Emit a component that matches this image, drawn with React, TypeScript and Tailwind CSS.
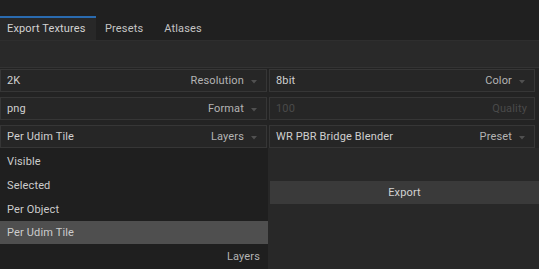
import React from "react";

const Caret = ({ dim }: { dim?: boolean }) => (
  <svg width="6" height="4" viewBox="0 0 6 4" className="ml-[7px]">
    <path d="M0 0 L6 0 L3 3.5 Z" fill={dim ? "#3a3a3a" : "#505050"} />
  </svg>
);

const Field = ({ value, label, disabled }: { value: string; label: string; disabled?: boolean }) => (
  <div className="flex h-[23px] items-center border border-[#363636] bg-[#262626] pl-[6px] pr-[9px] pt-[2px]">
    <span className={disabled ? "text-[#4a4a4a]" : "text-[#d0d0d0]"}>{value}</span>
    <span className={"ml-auto " + (disabled ? "text-[#4a4a4a] -mr-[2px]" : "text-[#b4b4b4]")}>{label}</span>
    {!disabled && <Caret />}
  </div>
);

export default function App() {
  return (
    <div
      className="relative h-[269px] w-[539px] overflow-hidden bg-[#202020] text-[11px] tracking-[0.15px]"
      style={{ fontFamily: "Roboto, 'Noto Sans', sans-serif" }}
    >
      <div className="h-[16px]" />
      <div className="flex h-[25px] items-stretch border-b border-[#2e2e2e]">
        <div className="flex w-[96px] items-center border-t-2 border-[#2a6bb0] bg-[#282828] pl-[7px] pt-[1px] text-[#d2d2d2]">
          Export Textures
        </div>
        <div className="flex items-center pl-[9px] pt-[3px] text-[#c4c4c4]">Presets</div>
        <div className="flex items-center pl-[21px] pt-[3px] text-[#c4c4c4]">Atlases</div>
      </div>
      <div className="h-[27px] border-b border-[#333333] bg-[#292929]" />
      <div className="bg-[#232323] pt-[1px]">
        <div className="grid grid-cols-[267px_266px] gap-x-[2px] gap-y-[5px] pr-[4px]">
          <Field value="2K" label="Resolution" />
          <Field value="8bit" label="Color" />
          <Field value="png" label="Format" />
          <Field value="100" label="Quality" disabled />
          <Field value="Per Udim Tile" label="Layers" />
          <Field value="WR PBR Bridge Blender" label="Preset" />
        </div>
      </div>
      <div className="flex h-[121px]">
        <div className="flex w-[268px] flex-col bg-[#1f1f1f] text-[#cccccc]">
          <div className="flex h-[25px] items-center pl-[7px] pt-[3px]">Visible</div>
          <div className="flex h-[24px] items-center pl-[7px] pt-[2px]">Selected</div>
          <div className="flex h-[24px] items-center pl-[7px] pt-[2px]">Per Object</div>
          <div className="flex h-[23px] items-center bg-[#4f4f4f] pl-[7px] pt-[2px]">Per Udim Tile</div>
          <div className="flex h-[25px] items-center justify-end pr-[8px] pt-[2px] text-[#b4b4b4]">Layers</div>
        </div>
        <div className="flex-1 bg-[#282828] pl-[2px]">
          <div className="h-[33px]" />
          <div className="flex h-[23px] items-center justify-center bg-[#3a3a3a] pt-[2px] text-[#d2d2d2]">Export</div>
        </div>
      </div>
    </div>
  );
}
